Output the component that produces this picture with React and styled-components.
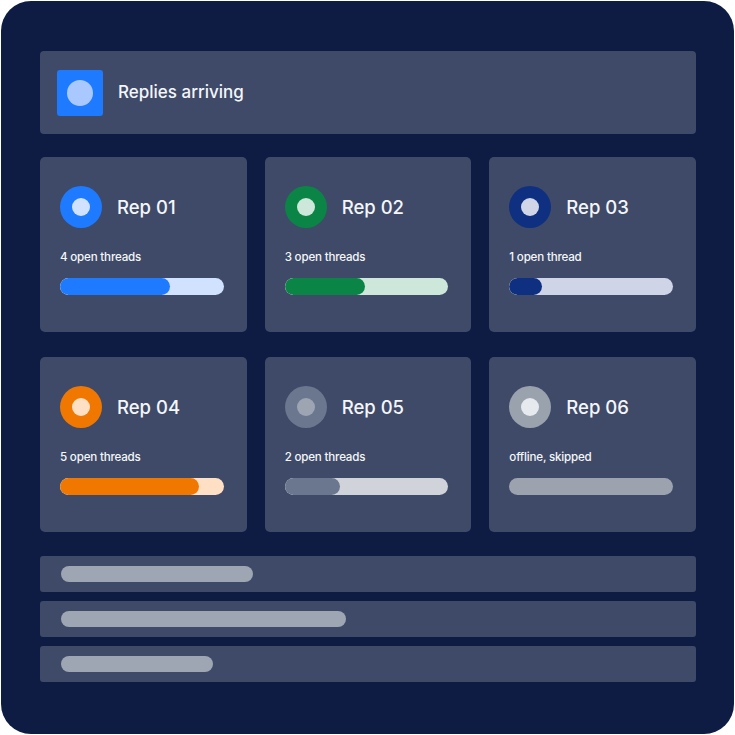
import React from "react";
import { createGlobalStyle, styled } from "styled-components";

const GlobalStyle = createGlobalStyle`
  html, body {
    margin: 0;
    padding: 0;
    background: #ffffff;
  }
  body {
    font-family: Inter, "Noto Sans", "Liberation Sans", sans-serif;
  }
`;

const Page = styled.div`
  padding: 1px;
  width: 735px;
  height: 735px;
  box-sizing: border-box;
`;

const Frame = styled.div`
  width: 733px;
  height: 733px;
  box-sizing: border-box;
  border-radius: 30px;
  background: #0e1c43;
  padding: 50px 38px 0 39px;
`;

const Header = styled.div`
  display: flex;
  align-items: center;
  gap: 15px;
  height: 83px;
  box-sizing: border-box;
  padding: 0 17px;
  background: #3e4a68;
  border-radius: 4px;
`;

const HeaderIcon = styled.div`
  width: 46px;
  height: 46px;
  border-radius: 3px;
  background: #1e7bff;
  display: flex;
  align-items: center;
  justify-content: center;

  &::after {
    content: "";
    width: 26px;
    height: 26px;
    border-radius: 50%;
    background: #a8c8ff;
  }
`;

const HeaderTitle = styled.span`
  color: #f4f6fa;
  font-size: 17px;
  font-weight: 500;
  margin-top: -1px;
`;

const Grid = styled.div`
  display: grid;
  grid-template-columns: repeat(3, 1fr);
  column-gap: 18px;
  row-gap: 25px;
  margin-top: 23px;
`;

const Card = styled.div`
  height: 175px;
  box-sizing: border-box;
  padding: 29px 23px 0 20px;
  background: #3e4a68;
  border-radius: 5px;
`;

const RepHead = styled.div`
  display: flex;
  align-items: center;
  gap: 15px;
`;

const Avatar = styled.div`
  width: 42px;
  height: 42px;
  border-radius: 50%;
  background: ${(p) => p.$ring};
  display: flex;
  align-items: center;
  justify-content: center;

  &::after {
    content: "";
    width: 18px;
    height: 18px;
    border-radius: 50%;
    background: ${(p) => p.$dot};
  }
`;

const RepName = styled.span`
  color: #f4f6fa;
  font-size: 18.5px;
  font-weight: 500;
`;

const Status = styled.div`
  margin-top: 22px;
  color: #f4f6fa;
  font-size: 11.6px;
  font-weight: 500;
  letter-spacing: -0.2px;
  line-height: 14px;
`;

const Track = styled.div`
  margin-top: 14px;
  height: 17px;
  border-radius: 9px;
  background: ${(p) => p.$track};
  overflow: hidden;
`;

const Fill = styled.div`
  height: 100%;
  border-radius: 9px;
  background: ${(p) => p.$fill};
`;

const Rows = styled.div`
  display: flex;
  flex-direction: column;
  gap: 9px;
  margin-top: 24px;
`;

const Row = styled.div`
  height: 36px;
  box-sizing: border-box;
  padding-left: 21px;
  display: flex;
  align-items: center;
  background: #3e4a68;
  border-radius: 3px;
`;

const Pill = styled.div`
  height: 16px;
  border-radius: 8px;
  background: #9ea6b4;
`;

const reps = [
  { name: "Rep 01", status: "4 open threads", ring: "#1e7bff", dot: "#d0e2ff", track: "#d0e2ff", fill: "#1e7bff", pct: 67 },
  { name: "Rep 02", status: "3 open threads", ring: "#0b8546", dot: "#cde7da", track: "#cde7da", fill: "#0b8546", pct: 49 },
  { name: "Rep 03", status: "1 open thread", ring: "#0f2f80", dot: "#d0d6e8", track: "#cfd4e6", fill: "#0f2f80", pct: 20 },
  { name: "Rep 04", status: "5 open threads", ring: "#f07800", dot: "#ffe0c4", track: "#ffe0c4", fill: "#f07800", pct: 85 },
  { name: "Rep 05", status: "2 open threads", ring: "#6b778e", dot: "#9da5b2", track: "#d0d3da", fill: "#6b778e", pct: 34 },
  { name: "Rep 06", status: "offline, skipped", ring: "#9aa2ae", dot: "#e6e9ee", track: "#9ca3af", fill: "#9ca3af", pct: 0 },
];

const rowWidths = [192, 285, 152];

const App = () => {
  return (
    <Page>
      <GlobalStyle />
      <Frame>
        <Header>
          <HeaderIcon />
          <HeaderTitle>Replies arriving</HeaderTitle>
        </Header>
        <Grid>
          {reps.map((rep) => (
            <Card key={rep.name}>
              <RepHead>
                <Avatar $ring={rep.ring} $dot={rep.dot} />
                <RepName>{rep.name}</RepName>
              </RepHead>
              <Status>{rep.status}</Status>
              <Track $track={rep.track}>
                <Fill $fill={rep.fill} style={{ width: `${rep.pct}%` }} />
              </Track>
            </Card>
          ))}
        </Grid>
        <Rows>
          {rowWidths.map((w) => (
            <Row key={w}>
              <Pill style={{ width: `${w}px` }} />
            </Row>
          ))}
        </Rows>
      </Frame>
    </Page>
  );
};

export default App;
